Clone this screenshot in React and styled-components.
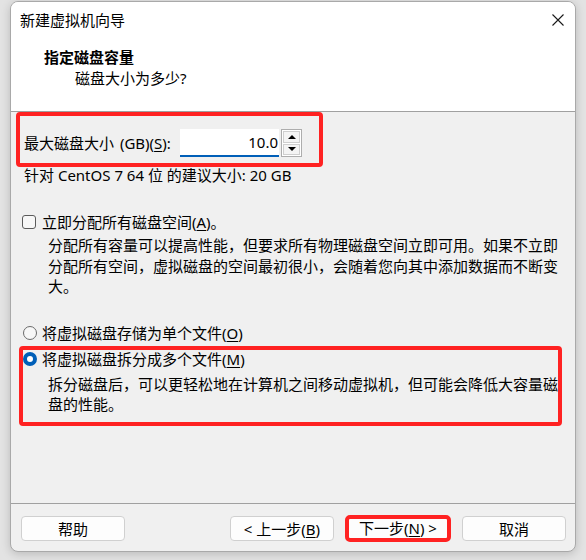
import React from "react";
import styled, { createGlobalStyle, css } from "styled-components";

const GlobalStyle = createGlobalStyle`
  html, body { margin: 0; padding: 0; }
  body {
    width: 586px;
    height: 560px;
    overflow: hidden;
    background: #e3e3e3;
    font-family: "Noto Sans", "Noto Sans CJK SC", sans-serif;
    font-size: 15px;
    color: #000;
  }
`;

const Window = styled.div`
  box-sizing: border-box;
  margin: 1px 0 0 10px;
  width: 566px;
  height: 551px;
  border: 1px solid #a9a9a9;
  border-radius: 8px;
  background: #f0f0f0;
  overflow: hidden;
  display: flex;
  flex-direction: column;
  box-shadow: 0 2px 10px rgba(0, 0, 0, 0.18);
`;

const Header = styled.div`
  box-sizing: border-box;
  height: 110px;
  background: #fff;
  border-bottom: 1px solid #a0a0a0;
  display: flex;
  flex-direction: column;
`;

const TitleBar = styled.div`
  height: 36px;
  display: flex;
  align-items: center;
  justify-content: space-between;
  padding: 0 11px 0 9px;
  line-height: 20px;
`;

const CloseIcon = styled.svg`
  width: 12px;
  height: 12px;
  display: block;
`;

const Heading = styled.div`
  margin: 9px 0 0 33px;
  font-weight: bold;
  line-height: 20px;
`;

const SubHeading = styled.div`
  margin: 1px 0 0 64px;
  line-height: 20px;
`;

const Body = styled.div`
  flex: 1;
  display: flex;
  flex-direction: column;
  align-items: flex-start;
`;

const marked = css`
  border: 4px solid #ff2222;
  border-radius: 4px;
`;

const SizeBox = styled.div`
  ${marked};
  box-sizing: border-box;
  margin-left: 5px;
  width: 307px;
  height: 55px;
  padding: 7px 0 0 4px;
  display: flex;
  align-items: center;
  align-self: flex-start;
`;

const FieldLabel = styled.span`
  flex: none;
  width: 156px;
  line-height: 28px;
  white-space: nowrap;
  word-spacing: 2px;
`;

const NumberInput = styled.div`
  box-sizing: border-box;
  width: 99px;
  height: 28px;
  background: #fff;
  border-bottom: 2px solid #005fb8;
  text-align: right;
  padding-right: 1px;
  line-height: 26px;
`;

const Spinner = styled.div`
  box-sizing: border-box;
  margin-left: 2px;
  width: 21px;
  height: 28px;
  border: 1px solid #adadad;
  display: flex;
  flex-direction: column;
  padding: 1px;
  gap: 1px;
  background: #fff;
`;

const SpinHalf = styled.div`
  flex: 1;
  border: 1px solid #cfcfcf;
  background: #f4f4f4;
  display: flex;
  align-items: center;
  justify-content: center;
`;

const Arrow = styled.div`
  width: 0;
  height: 0;
  border-left: 4px solid transparent;
  border-right: 4px solid transparent;
  ${(p) =>
    p.$up
      ? "border-bottom: 4px solid #000;"
      : "border-top: 4px solid #000;"}
`;

const Hint = styled.div`
  margin: -2px 0 0 13px;
  line-height: 20px;
`;

const OptionRow = styled.div`
  display: flex;
  align-items: center;
  gap: ${(p) => p.$gap || 6}px;
  margin: ${(p) => p.$mt || 0}px 0 0 ${(p) => p.$ml || 0}px;
  line-height: ${(p) => p.$lh || 20}px;
`;

const CheckBox = styled.span`
  box-sizing: border-box;
  width: 14px;
  height: 14px;
  border: 1px solid #5b5b5b;
  border-radius: 3px;
  background: #f7f7f7;
  flex: none;
`;

const Radio = styled.span`
  box-sizing: border-box;
  width: 14px;
  height: 14px;
  border-radius: 50%;
  flex: none;
  ${(p) =>
    p.$checked
      ? css`
          border: 4px solid #005fb8;
          box-shadow: inset 0 0 0 3px #fff;
          background: #fff;
        `
      : css`
          border: 1px solid #6b6b6b;
          background: #f7f7f7;
        `}
`;

const Paragraph = styled.p`
  margin: ${(p) => p.$mt || 0}px 0 0 ${(p) => p.$ml || 0}px;
  width: 512px;
  line-height: 20.5px;
`;

const SplitBox = styled.div`
  ${marked};
  box-sizing: border-box;
  margin: 3px 0 0 8px;
  width: 543px;
  height: 80px;
  display: flex;
  flex-direction: column;
`;

const U = styled.span`
  text-decoration: underline;
  text-underline-offset: 2px;
`;

const Footer = styled.div`
  box-sizing: border-box;
  height: 48px;
  border-top: 1px solid #a0a0a0;
  padding: 12px 9px 0 10px;
  display: flex;
  align-items: flex-start;
  gap: 12px;
`;

const Spacer = styled.div`
  flex: 1;
`;

const Button = styled.button`
  box-sizing: border-box;
  width: 104px;
  height: 25px;
  padding: 0;
  background: #fdfdfd;
  border: 1px solid #d0d0d0;
  border-radius: 4px;
  font-family: inherit;
  font-size: 15px;
  color: #000;
  line-height: 22px;
  ${(p) =>
    p.$primary &&
    css`
      border-bottom: 2px solid #005fb8;
      outline: 4px solid #ff2222;
      outline-offset: -3px;
    `}
`;

export default function App() {
  return (
    <>
      <GlobalStyle />
      <Window>
        <Header>
          <TitleBar>
            <span>新建虚拟机向导</span>
            <CloseIcon viewBox="0 0 12 12">
              <path d="M0.5 0.5 L11.5 11.5 M11.5 0.5 L0.5 11.5" stroke="#1a1a1a" strokeWidth="1.1" fill="none" />
            </CloseIcon>
          </TitleBar>
          <Heading>指定磁盘容量</Heading>
          <SubHeading>磁盘大小为多少?</SubHeading>
        </Header>
        <Body>
          <SizeBox>
            <FieldLabel>
              最大磁盘大小 (GB)(<U>S</U>):
            </FieldLabel>
            <NumberInput>10.0</NumberInput>
            <Spinner>
              <SpinHalf>
                <Arrow $up />
              </SpinHalf>
              <SpinHalf>
                <Arrow />
              </SpinHalf>
            </Spinner>
          </SizeBox>
          <Hint>针对 CentOS 7 64 位 的建议大小: 20 GB</Hint>
          <OptionRow $mt={27} $ml={11}>
            <CheckBox />
            <span>
              立即分配所有磁盘空间(<U>A</U>)。
            </span>
          </OptionRow>
          <Paragraph $mt={3} $ml={37}>
            分配所有容量可以提高性能，但要求所有物理磁盘空间立即可用。如果不立即分配所有空间，虚拟磁盘的空间最初很小，会随着您向其中添加数据而不断变大。
          </Paragraph>
          <OptionRow $mt={26} $ml={12} $gap={5}>
            <Radio />
            <span>
              将虚拟磁盘存储为单个文件(<U>O</U>)
            </span>
          </OptionRow>
          <SplitBox>
            <OptionRow $lh={18} $gap={5}>
              <Radio $checked />
              <span>
                将虚拟磁盘拆分成多个文件(<U>M</U>)
              </span>
            </OptionRow>
            <Paragraph $mt={6} $ml={25}>
              拆分磁盘后，可以更轻松地在计算机之间移动虚拟机，但可能会降低大容量磁盘的性能。
            </Paragraph>
          </SplitBox>
        </Body>
        <Footer>
          <Button>帮助</Button>
          <Spacer />
          <Button>
            &lt; 上一步(<U>B</U>)
          </Button>
          <Button $primary>
            下一步(<U>N</U>) &gt;
          </Button>
          <Button>取消</Button>
        </Footer>
      </Window>
    </>
  );
}
